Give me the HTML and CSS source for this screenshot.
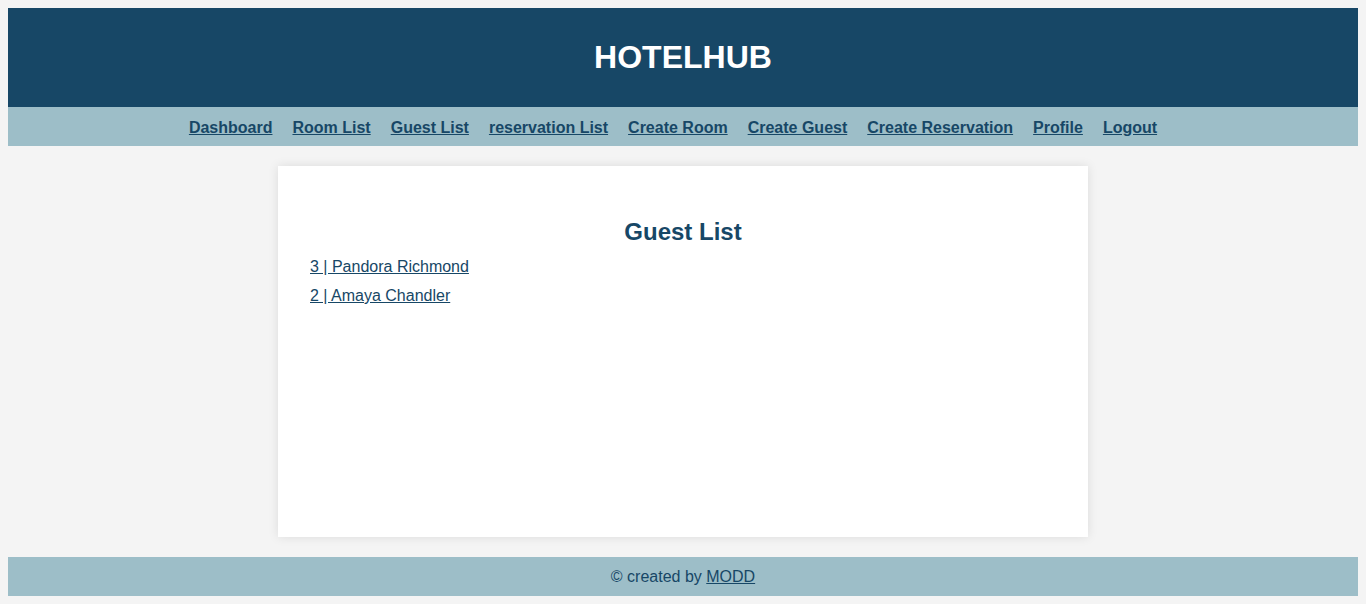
FILE: index.html
```html
<!DOCTYPE html>
<html lang="en">
<head>
<meta charset="utf-8">
<title>HotelHub - Guest List</title>
<link rel="stylesheet" href="styles.css">
</head>
<body>
<div class="page">
  <header class="site-header">
    <h1 class="brand">HOTELHUB</h1>
  </header>
  <nav class="site-nav">
    <a href="#">Dashboard</a>
    <a href="#">Room List</a>
    <a href="#">Guest List</a>
    <a href="#">reservation List</a>
    <a href="#">Create Room</a>
    <a href="#">Create Guest</a>
    <a href="#">Create Reservation</a>
    <a href="#">Profile</a>
    <a href="#">Logout</a>
  </nav>
  <main class="main">
    <section class="card">
      <h2 class="card-title">Guest List</h2>
      <ul class="guest-list">
        <li><a href="#">3 | Pandora Richmond</a></li>
        <li><a href="#">2 | Amaya Chandler</a></li>
      </ul>
    </section>
  </main>
  <footer class="site-footer">
    &copy; created by <a href="#">MODD</a>
  </footer>
</div>
</body>
</html>
```
FILE: styles.css
```css
html, body {
  margin: 0;
  padding: 0;
}
body {
  background: #f4f4f4;
  font-family: "Liberation Sans", Arial, sans-serif;
  font-size: 16px;
  color: #17476a;
  padding: 8px;
  box-sizing: border-box;
  min-height: 100vh;
  display: flex;
}
.page {
  flex: 1;
  display: flex;
  flex-direction: column;
}
.site-header {
  background: #174766;
  padding: 31px 0;
  text-align: center;
}
.brand {
  margin: 0;
  color: #ffffff;
  font-size: 32px;
  line-height: 37px;
  font-weight: bold;
}
.site-nav {
  background: #9dbec8;
  padding: 10px 0;
  height: 39px;
  box-sizing: border-box;
  line-height: 19px;
  display: flex;
  justify-content: center;
  align-items: center;
}
.site-nav a {
  color: #174766;
  font-weight: bold;
  text-decoration: underline;
  margin-right: 20px;
  position: relative;
  top: 0.5px;
}
.main {
  flex: 1;
  display: flex;
  justify-content: center;
  padding: 20px 0;
}
.card {
  width: 60%;
  background: #ffffff;
  box-shadow: 0 0 10px rgba(0, 0, 0, 0.1);
  padding: 32px;
  box-sizing: border-box;
}
.card-title {
  margin: 20px 0 12px;
  text-align: center;
  font-size: 24px;
  line-height: 28px;
  color: #174766;
}
.guest-list {
  list-style: none;
  margin: 0;
  padding: 0;
  display: flex;
  flex-direction: column;
  gap: 11px;
}
.guest-list li {
  line-height: 18px;
}
.guest-list a {
  color: #174766;
  text-decoration: underline;
}
.site-footer {
  background: #9dbec8;
  padding: 10px 0;
  line-height: 19px;
  text-align: center;
  color: #174766;
}
.site-footer a {
  color: #174766;
}
```
